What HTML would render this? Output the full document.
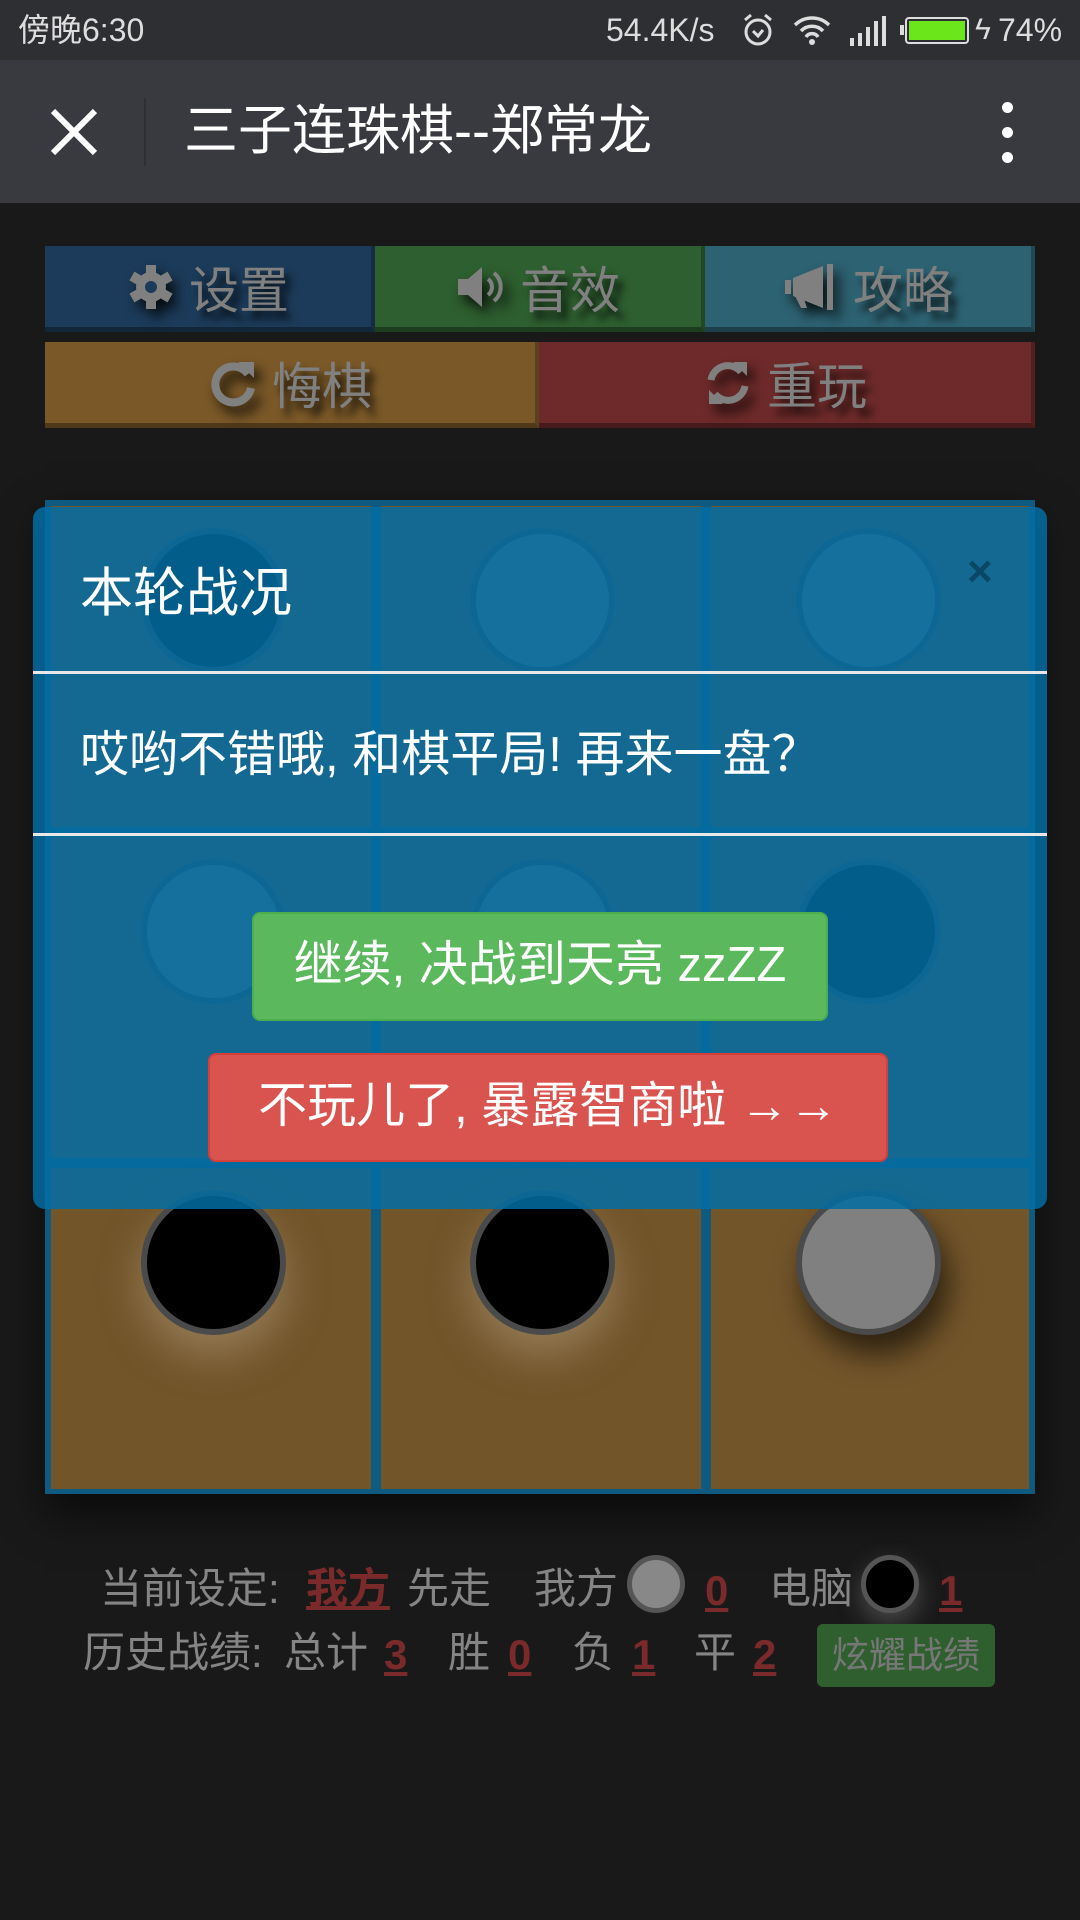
<!DOCTYPE html>
<html><head><meta charset="utf-8"><style>
*{margin:0;padding:0;box-sizing:border-box}
body{width:1080px;height:1920px;background:#191919;position:relative;overflow:hidden;font-family:"Liberation Sans","Noto Sans CJK SC",sans-serif}
.a{position:absolute}
.sb{left:0;top:0;width:1080px;height:60px;background:#2e2f33;color:#ddd;font-size:32px;line-height:60px}
.hd{left:0;top:60px;width:1080px;height:143px;background:#393a3f}
.btn{position:absolute;color:#808080;font-size:50px;text-shadow:6px 8px 8px rgba(0,0,0,.8);border-bottom:5px solid rgba(0,0,0,.35);border-right:4px solid rgba(0,0,0,.25);display:flex;align-items:center;justify-content:center;gap:14px}
.btn svg{filter:drop-shadow(6px 8px 6px rgba(0,0,0,.8))}
.cell{position:absolute;width:320px;height:321px;background:#73552a}
.pc{position:absolute;width:145px;height:145px;border-radius:50%;border:6px solid #4a4a4a}
.bt{position:absolute;color:#858585;font-size:42px;white-space:nowrap;line-height:50px}
.r{color:#7a2a2a;text-decoration:underline;font-weight:bold}
</style></head><body>
<div class="a sb"><span style="position:absolute;left:18px">傍晚6:30</span>
<span style="position:absolute;left:606px">54.4K/s</span>
<svg class="a" style="left:741px;top:12px" width="34" height="36" viewBox="0 0 34 36"><circle cx="17" cy="20" r="12" fill="none" stroke="#ddd" stroke-width="3"/><path d="M12 19l5 5 5-6M4 8l6-5M30 8l-6-5" stroke="#ddd" stroke-width="3" fill="none"/></svg>
<svg class="a" style="left:792px;top:14px" width="40" height="32" viewBox="0 0 40 32"><path d="M3 11a24 24 0 0 1 34 0M9 17a15 15 0 0 1 22 0M14 23a7 7 0 0 1 12 0" stroke="#ddd" stroke-width="3.5" fill="none"/><circle cx="20" cy="28" r="3" fill="#ddd"/></svg>
<svg class="a" style="left:850px;top:16px" width="38" height="30"><rect x="0" y="22" width="4" height="8" fill="#ddd"/><rect x="8" y="17" width="4" height="13" fill="#ddd"/><rect x="16" y="11" width="4" height="19" fill="#ddd"/><rect x="24" y="5" width="4" height="25" fill="#ddd"/><rect x="32" y="0" width="4" height="30" fill="#ddd"/></svg>
<div class="a" style="left:905px;top:17px;width:64px;height:27px;border:2px solid #ddd;border-radius:4px;padding:2px"><div style="width:100%;height:100%;background:#6be61a"></div></div>
<div class="a" style="left:900px;top:25px;width:4px;height:10px;background:#ddd"></div>
<span style="position:absolute;left:975px;font-size:30px">ϟ</span>
<span style="position:absolute;left:998px">74%</span>
</div>
<div class="a hd">
<svg class="a" style="left:49px;top:47px" width="50" height="50"><path d="M4 4L46 46M46 4L4 46" stroke="#fff" stroke-width="6"/></svg>
<div class="a" style="left:144px;top:38px;width:2px;height:68px;background:#2e2f33"></div>
<div class="a" style="left:184px;top:36px;color:#fff;font-size:54px;line-height:70px">三子连珠棋--郑常龙</div>
<div class="a" style="left:1002px;top:42px;width:11px;height:11px;border-radius:50%;background:#fff"></div>
<div class="a" style="left:1002px;top:67px;width:11px;height:11px;border-radius:50%;background:#fff"></div>
<div class="a" style="left:1002px;top:92px;width:11px;height:11px;border-radius:50%;background:#fff"></div>
</div>
<div class="btn" style="left:45px;top:246px;width:330px;height:86px;background:#1c3b5a">
<svg width="48" height="50" viewBox="0 0 48 50"><g fill="#808080"><circle cx="24" cy="25" r="15"/><rect x="19" y="3" width="10" height="44"/><rect x="19" y="3" width="10" height="44" transform="rotate(60 24 25)"/><rect x="19" y="3" width="10" height="44" transform="rotate(120 24 25)"/></g><circle cx="24" cy="25" r="6" fill="#1c3b5a"/></svg>设置</div>
<div class="btn" style="left:375px;top:246px;width:330px;height:86px;background:#2e5f30">
<svg width="50" height="44" viewBox="0 0 50 44"><path d="M2 14h10l14-12v40L12 30H2z" fill="#808080"/><path d="M32 14a10 10 0 0 1 0 16M38 8a18 18 0 0 1 0 28" stroke="#808080" stroke-width="4" fill="none"/></svg>音效</div>
<div class="btn" style="left:705px;top:246px;width:330px;height:86px;background:#2d6272">
<svg width="56" height="50" viewBox="0 0 56 50"><path d="M2 18h6v14H2z M10 16l30-12v42L10 34z" fill="#808080"/><rect x="44" y="2" width="6" height="46" fill="#808080"/><path d="M12 34l6 12h6l-4-12z" fill="#808080"/></svg>攻略</div>
<div class="btn" style="left:45px;top:342px;width:494px;height:86px;background:#7a5828">
<svg width="50" height="50" viewBox="0 0 50 50"><path d="M40 16A18 18 0 1 0 43 30" stroke="#808080" stroke-width="8" fill="none"/><path d="M30 4h16v16z" fill="#808080"/></svg>悔棋</div>
<div class="btn" style="left:539px;top:342px;width:496px;height:86px;background:#6e2a2a">
<svg width="50" height="50" viewBox="0 0 50 50"><path d="M8 22A17 17 0 0 1 38 14M42 28A17 17 0 0 1 12 36" stroke="#808080" stroke-width="7" fill="none"/><path d="M30 4h14v14zM20 46H6V32z" fill="#808080"/></svg>重玩</div>
<!-- board -->
<div class="a" style="left:45px;top:500px;width:990px;height:994px;background:#0e5a80;box-shadow:0 20px 40px rgba(0,0,0,.6)"></div>
<div class="cell" style="left:51px;top:506px"></div><div class="cell" style="left:381px;top:506px"></div><div class="cell" style="left:711px;top:506px;width:318px"></div>
<div class="cell" style="left:51px;top:837px"></div><div class="cell" style="left:381px;top:837px"></div><div class="cell" style="left:711px;top:837px;width:318px"></div>
<div class="cell" style="left:51px;top:1168px"></div><div class="cell" style="left:381px;top:1168px"></div><div class="cell" style="left:711px;top:1168px;width:318px"></div>
<div class="pc" style="left:141px;top:528px;background:#000"></div>
<div class="pc" style="left:470px;top:528px;background:#888"></div>
<div class="pc" style="left:796px;top:528px;background:#888"></div>
<div class="pc" style="left:141px;top:859px;background:#888"></div>
<div class="pc" style="left:470px;top:859px;background:#888"></div>
<div class="pc" style="left:796px;top:859px;background:#000"></div>
<div class="pc" style="left:141px;top:1190px;background:#000;box-shadow:0 20px 40px rgba(180,160,130,.5)"></div>
<div class="pc" style="left:470px;top:1190px;background:#000;box-shadow:0 20px 40px rgba(180,160,130,.5)"></div>
<div class="pc" style="left:796px;top:1190px;background:#808080;box-shadow:8px 20px 30px rgba(0,0,0,.6)"></div>
<!-- modal -->
<div class="a" style="left:33px;top:507px;width:1014px;height:702px;border-radius:12px;background:rgba(4,108,162,.86)">
<div class="a" style="left:47px;top:44px;color:#fff;font-size:53px">本轮战况</div>
<div class="a" style="left:934px;top:40px;color:#0a4766;font-size:44px;font-weight:bold">×</div>
<div class="a" style="left:0;top:164px;width:1014px;height:3px;background:#e8e8e8"></div>
<div class="a" style="left:47px;top:208px;color:#fff;font-size:49px;white-space:nowrap">哎哟不错哦, 和棋平局! 再来一盘？</div>
<div class="a" style="left:0;top:326px;width:1014px;height:3px;background:#e8e8e8"></div>
<div class="a" style="left:219px;top:405px;width:576px;height:109px;background:#5cb85c;border:2px solid #4cae4c;border-radius:8px;color:#fff;font-size:49px;text-align:center;line-height:103px;white-space:nowrap">继续, 决战到天亮 zzZZ</div>
<div class="a" style="left:175px;top:546px;width:680px;height:109px;background:#d9534f;border:2px solid #d43f3a;border-radius:8px;color:#fff;font-size:49px;text-align:center;line-height:103px;white-space:nowrap">不玩儿了, 暴露智商啦 →→</div>
</div>
<!-- bottom -->
<div class="bt" style="left:100px;top:1564px">当前设定:</div>
<div class="bt r" style="left:306px;top:1564px">我方</div>
<div class="bt" style="left:407px;top:1564px">先走</div>
<div class="bt" style="left:534px;top:1564px">我方</div>
<div class="a" style="left:627px;top:1555px;width:58px;height:58px;border-radius:50%;background:#888;border:5px solid #555"></div>
<div class="bt r" style="left:705px;top:1566px">0</div>
<div class="bt" style="left:769px;top:1564px">电脑</div>
<div class="a" style="left:861px;top:1555px;width:58px;height:58px;border-radius:50%;background:#000;border:5px solid #555;box-shadow:0 10px 25px rgba(150,150,150,.4)"></div>
<div class="bt r" style="left:939px;top:1566px">1</div>
<div class="bt" style="left:83px;top:1628px">历史战绩:</div>
<div class="bt" style="left:284px;top:1628px">总计</div>
<div class="bt r" style="left:384px;top:1630px">3</div>
<div class="bt" style="left:448px;top:1628px">胜</div>
<div class="bt r" style="left:508px;top:1630px">0</div>
<div class="bt" style="left:572px;top:1628px">负</div>
<div class="bt r" style="left:632px;top:1630px">1</div>
<div class="bt" style="left:694px;top:1628px">平</div>
<div class="bt r" style="left:753px;top:1630px">2</div>
<div class="a" style="left:817px;top:1624px;width:178px;height:63px;background:#2f5f2f;border-radius:6px;color:#777;font-size:37px;text-align:center;line-height:63px">炫耀战绩</div>
</body></html>
